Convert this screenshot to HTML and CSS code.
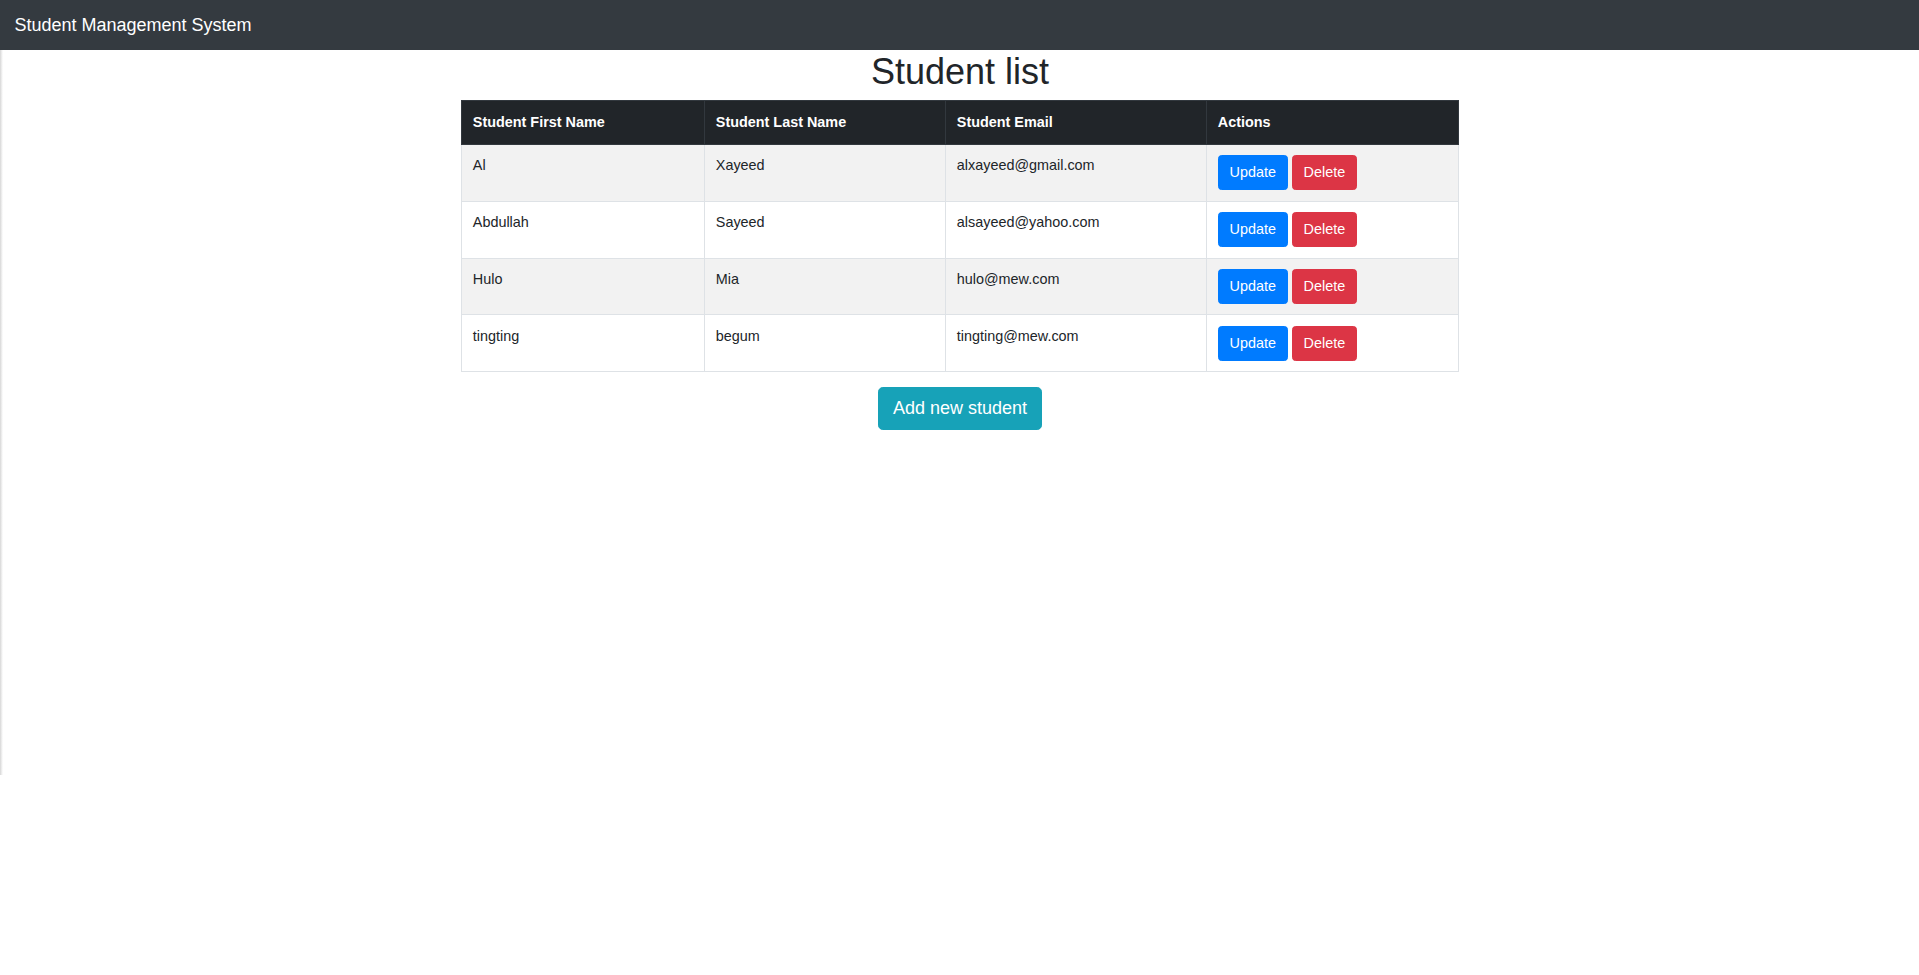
FILE: index.html
```html
<!DOCTYPE html>
<html lang="en">
<head>
<meta charset="utf-8">
<title>Student Management System</title>
<link rel="stylesheet" href="styles.css">
</head>
<body>
<div class="page">
  <nav class="navbar">
    <span class="brand">Student Management System</span>
  </nav>
  <main class="container">
    <h1 class="title">Student list</h1>
    <table class="table">
      <thead>
        <tr>
          <th class="c1">Student First Name</th>
          <th class="c2">Student Last Name</th>
          <th class="c3">Student Email</th>
          <th class="c4">Actions</th>
        </tr>
      </thead>
      <tbody>
        <tr>
          <td>Al</td><td>Xayeed</td><td>alxayeed@gmail.com</td>
          <td><button class="btn btn-primary">Update</button> <button class="btn btn-danger">Delete</button></td>
        </tr>
        <tr>
          <td>Abdullah</td><td>Sayeed</td><td>alsayeed@yahoo.com</td>
          <td><button class="btn btn-primary">Update</button> <button class="btn btn-danger">Delete</button></td>
        </tr>
        <tr>
          <td>Hulo</td><td>Mia</td><td>hulo@mew.com</td>
          <td><button class="btn btn-primary">Update</button> <button class="btn btn-danger">Delete</button></td>
        </tr>
        <tr>
          <td>tingting</td><td>begum</td><td>tingting@mew.com</td>
          <td><button class="btn btn-primary">Update</button> <button class="btn btn-danger">Delete</button></td>
        </tr>
      </tbody>
    </table>
    <div class="actions">
      <button class="btn btn-info btn-lg">Add new student</button>
    </div>
  </main>
</div>
</body>
</html>
```
FILE: styles.css
```css
* { box-sizing: border-box; }
html, body { margin: 0; padding: 0; }
body {
  font-family: "Liberation Sans", Arial, sans-serif;
  font-size: 14.4px;
  line-height: 1.5;
  color: #212529;
  background: #fff;
}
.page {
  position: relative;
  min-height: 775px;
}
.page::before {
  content: "";
  position: absolute;
  left: 0;
  top: 50px;
  width: 3px;
  height: 725px;
  background: linear-gradient(to right, #d6d6d6, #f0f0f0 60%, #fff);
}
.navbar {
  background: #343a40;
  height: 50px;
  padding: 7.2px 14.4px;
  display: flex;
  align-items: center;
}
.brand {
  color: #fff;
  font-size: 18px;
  line-height: 27px;
  padding: 4.5px 0;
}
.container {
  width: 1026px;
  margin: 0 auto;
  padding: 0 13.5px 0 14.5px;
}
.title {
  text-align: center;
  font-size: 36px;
  font-weight: 500;
  line-height: 1.2;
  margin: 0 0 7.2px;
}
.table {
  width: 100%;
  border-collapse: collapse;
  margin-bottom: 14.4px;
  border: 1px solid #dee2e6;
}
.table th, .table td {
  padding: 10.8px;
  vertical-align: top;
  text-align: left;
  border: 1px solid #dee2e6;
}
.table thead th {
  background: #212529;
  color: #fff;
  border-color: #32383e;
  border-bottom-width: 1px;
  padding: 10.3px 10.8px;
  font-weight: bold;
  vertical-align: bottom;
}
.table tbody tr:nth-child(odd) { background: #f2f2f2; }
.c1 { width: 243px; }
.c2 { width: 241px; }
.c3 { width: 261px; }
.btn {
  display: inline-block;
  font-family: inherit;
  font-size: 14.4px;
  line-height: 21.6px;
  padding: 5.4px 10.8px;
  border: 1px solid transparent;
  border-radius: 3.6px;
  color: #fff;
  cursor: pointer;
  vertical-align: middle;
}
.btn-primary { background: #007bff; border-color: #007bff; }
.btn-danger { background: #dc3545; border-color: #dc3545; }
.btn-info { background: #17a2b8; border-color: #17a2b8; }
.btn-lg {
  font-size: 18px;
  line-height: 27px;
  padding: 7.2px 14.4px;
  border-radius: 4.8px;
}
.actions { text-align: center; }
```
